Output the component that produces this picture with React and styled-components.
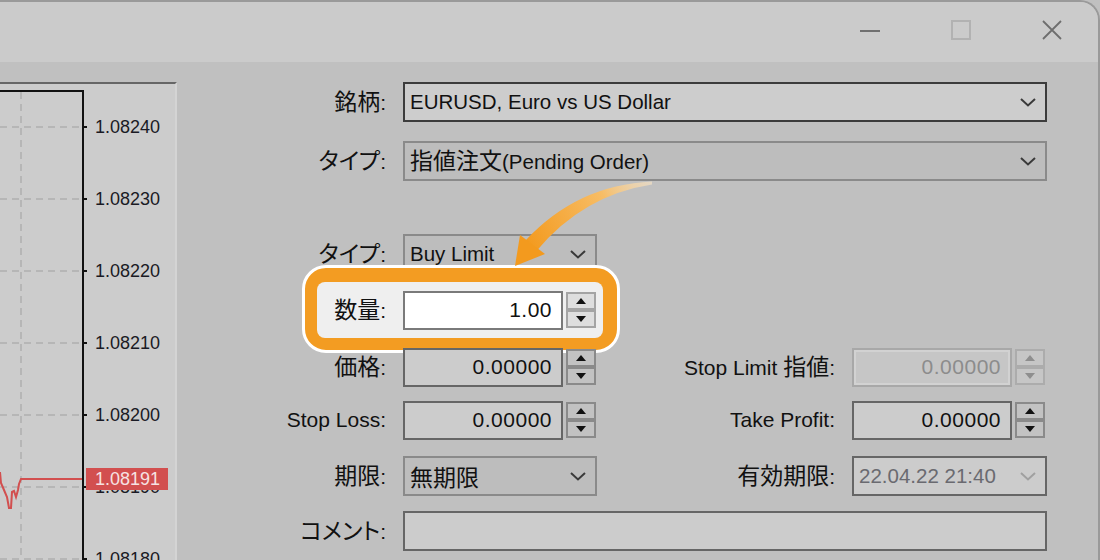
import React from 'react';
import styled, { createGlobalStyle } from 'styled-components';

const GlobalStyle = createGlobalStyle`
  * { box-sizing: border-box; }
  html, body { margin: 0; padding: 0; }
  body {
    width: 1100px;
    height: 560px;
    overflow: hidden;
    background: #c0c0c0;
    font-family: "Liberation Sans", "Noto Sans CJK JP", sans-serif;
  }
`;

const Window = styled.div`
  position: relative;
  width: 1100px;
  height: 560px;
  background: #c0c0c0;
  border-top: 2px solid #9a9a9a;
  border-right: 2px solid #9a9a9a;
  border-top-right-radius: 20px;
  overflow: hidden;
  display: flex;
  flex-direction: column;
`;

const TitleBar = styled.div`
  height: 60px;
  flex: none;
  background: #cbcbcb;
  display: flex;
  justify-content: flex-end;
  align-items: flex-start;
  gap: 71px;
  padding: 18px 36px 0 0;
`;

const TitleButton = styled.svg`
  width: 20px;
  height: 20px;
  display: block;
`;

const Content = styled.div`
  flex: 1;
  display: flex;
  min-height: 0;
`;

const ChartPanel = styled.div`
  width: 177px;
  flex: none;
  margin-top: 20px;
  background: #cccccc;
  border-top: 2px solid #666;
  border-right: 2px solid #d4d4d4;
  display: flex;
  overflow: hidden;
`;

const Plot = styled.div`
  width: 84px;
  flex: none;
  margin-top: 6px;
  border-top: 2px solid #111;
  border-right: 2px solid #111;
`;

const Axis = styled.div`
  position: relative;
  flex: 1;
  padding-top: 7px;
`;

const AxisLabel = styled.div`
  position: relative;
  height: 72px;
  display: flex;
  align-items: center;
  padding-left: 11px;
  font-size: 18px;
  color: #1a1a24;

  &::before {
    content: "";
    position: absolute;
    left: 0;
    top: 35px;
    width: 3px;
    height: 2px;
    background: #111;
  }
`;

const PriceBadge = styled.div`
  position: absolute;
  left: 2px;
  top: 384px;
  width: 82px;
  height: 22px;
  background: #d24f4f;
  color: #f6e2e2;
  font-size: 18px;
  line-height: 22px;
  padding-left: 9px;
`;

const Form = styled.div`
  flex: 1;
  padding-top: 20px;
`;

const Row = styled.div`
  position: relative;
  display: grid;
  grid-template-columns: 226px 194px 255px 195px;
  height: 40px;
  margin-top: ${p => p.$mt || 0}px;
  align-items: center;
`;

const Label = styled.div`
  position: relative;
  z-index: 2;
  text-align: right;
  padding-right: 17px;
  font-size: 21px;
  color: #111;
  white-space: nowrap;
`;

const Jp = styled.span`
  font-family: "Noto Sans CJK JP", sans-serif;
  font-size: 23px;
  font-feature-settings: "palt";
  line-height: 1;
`;

const fieldColors = {
  focus: { bg: '#cdcdcd', border: '#3c3c3c', text: '#111', arrow: '#3a3a3a' },
  normal: { bg: '#bdbdbd', border: '#8a8a8a', text: '#111', arrow: '#3a3a3a' },
  edit: { bg: '#cccccc', border: '#666', text: '#111', arrow: '#3a3a3a' },
  locked: { bg: '#cccccc', border: '#666', text: '#6a6a70', arrow: '#a0a0a0' },
  white: { bg: '#ffffff', border: '#7a7a7a', text: '#111', arrow: '#3a3a3a' },
  disabled: { bg: '#c6c6c6', border: '#a8a8a8', text: '#8c8c8c', arrow: '#a0a0a0' },
};

const Combo = styled.div`
  grid-column: ${p => (p.$wide ? '2 / span 3' : 'auto')};
  height: 40px;
  display: flex;
  align-items: center;
  justify-content: space-between;
  padding: 0 9px 0 5px;
  background: ${p => fieldColors[p.$kind].bg};
  border: 2px solid ${p => fieldColors[p.$kind].border};
  color: ${p => fieldColors[p.$kind].text};
  font-size: 20.5px;
  white-space: nowrap;

  svg { color: ${p => fieldColors[p.$kind].arrow}; }
`;

const SpinField = styled.div`
  position: relative;
  z-index: 2;
  display: flex;
  align-items: center;
  gap: 3px;
  height: 40px;
`;

const NumBox = styled.div`
  width: 160px;
  height: 39px;
  display: flex;
  align-items: center;
  justify-content: flex-end;
  padding-right: 9px;
  background: ${p => fieldColors[p.$kind].bg};
  border: 2px solid ${p => fieldColors[p.$kind].border};
  box-shadow: ${p => (p.$kind === 'disabled' ? 'inset 0 0 0 2px #d2d2d2' : 'none')};
  color: ${p => fieldColors[p.$kind].text};
  font-size: 21px;
  letter-spacing: 0.5px;
`;

const Spinner = styled.div`
  width: 30px;
  height: 36px;
  display: flex;
  flex-direction: column;
`;

const SpinButton = styled.div`
  flex: 1;
  display: flex;
  align-items: center;
  justify-content: center;
  background: ${p => (p.$light ? '#dedede' : p.$off ? '#c6c6c6' : '#c2c2c2')};
  border: 2px solid ${p => (p.$light ? '#a4a4a4' : p.$off ? '#acacac' : '#8a8a8a')};
  color: ${p => (p.$off ? '#8e8e8e' : '#111')};
`;

const Highlight = styled.div`
  position: absolute;
  z-index: 1;
  left: 125px;
  top: -25px;
  width: 318px;
  height: 88px;
  border: 3px solid #fff;
  border-radius: 24px;
  background: #f39c22;
  padding: 14px 14px 12px 12px;
`;

const HighlightFill = styled.div`
  height: 100%;
  border-radius: 8px;
  background: #efefef;
`;

const Overlay = styled.svg`
  position: absolute;
  left: 0;
  top: -2px;
  z-index: 5;
  pointer-events: none;
`;

const Chevron = () => (
  <svg width="16" height="9" viewBox="0 0 16 9">
    <polyline points="1,1 8,7.5 15,1" fill="none" stroke="currentColor" strokeWidth="2" />
  </svg>
);

const Spin = ({ light, off }) => (
  <Spinner>
    <SpinButton $light={light} $off={off}>
      <svg width="10" height="6" viewBox="0 0 10 6"><polygon points="0,6 5,0 10,6" fill="currentColor" /></svg>
    </SpinButton>
    <SpinButton $light={light} $off={off}>
      <svg width="10" height="6" viewBox="0 0 10 6"><polygon points="0,0 10,0 5,6" fill="currentColor" /></svg>
    </SpinButton>
  </Spinner>
);

const NumberField = ({ value, kind = 'edit', light }) => (
  <SpinField>
    <NumBox $kind={kind}>{value}</NumBox>
    <Spin light={light} off={kind === 'disabled'} />
  </SpinField>
);

const prices = ['1.08240', '1.08230', '1.08220', '1.08210', '1.08200', '1.08190', '1.08180'];
const gridY = [35, 107, 179, 251, 323, 395, 467];

const App = () => {
  return (
    <>
      <GlobalStyle />
      <Window>
        <TitleBar>
          <TitleButton viewBox="0 0 20 20">
            <line x1="0" y1="11" x2="20" y2="11" stroke="#707070" strokeWidth="2" />
          </TitleButton>
          <TitleButton viewBox="0 0 20 20">
            <rect x="1" y="1" width="18" height="18" fill="none" stroke="#b2b2b2" strokeWidth="2" />
          </TitleButton>
          <TitleButton viewBox="0 0 20 20">
            <path d="M1 1 L19 19 M19 1 L1 19" stroke="#6e6e6e" strokeWidth="1.8" />
          </TitleButton>
        </TitleBar>

        <Content>
          <ChartPanel>
            <Plot>
              <svg width="82" height="480" viewBox="0 0 82 480">
                {gridY.map(y => (
                  <line key={y} x1="0" y1={y} x2="82" y2={y} stroke="#b6b6b6" strokeWidth="2" strokeDasharray="7 5" />
                ))}
                <line x1="21" y1="0" x2="21" y2="480" stroke="#b6b6b6" strokeWidth="2" strokeDasharray="7 5" />
                <polyline
                  points="0,380 1,391 4,398 7,405 9,416 11,416 12,400 14,399 16,405 18,398 19,392 21,387 82,387"
                  fill="none"
                  stroke="#d24f4f"
                  strokeWidth="2"
                />
              </svg>
            </Plot>
            <Axis>
              {prices.map(p => (
                <AxisLabel key={p}>{p}</AxisLabel>
              ))}
              <PriceBadge>1.08191</PriceBadge>
            </Axis>
          </ChartPanel>

          <Form>
            <Row>
              <Label><Jp>銘柄</Jp>:</Label>
              <Combo $wide $kind="focus">EURUSD, Euro vs US Dollar<Chevron /></Combo>
            </Row>
            <Row $mt={19}>
              <Label><Jp>タイプ</Jp>:</Label>
              <Combo $wide $kind="normal"><span><Jp>指値注文</Jp>(Pending Order)</span><Chevron /></Combo>
            </Row>
            <Row $mt={53}>
              <Label><Jp>タイプ</Jp>:</Label>
              <Combo $kind="normal">Buy Limit<Chevron /></Combo>
            </Row>
            <Row $mt={16}>
              <Highlight><HighlightFill /></Highlight>
              <Label><Jp>数量</Jp>:</Label>
              <NumberField value="1.00" kind="white" light />
            </Row>
            <Row $mt={17}>
              <Label><Jp>価格</Jp>:</Label>
              <NumberField value="0.00000" />
              <Label>Stop Limit <Jp>指値</Jp>:</Label>
              <NumberField value="0.00000" kind="disabled" />
            </Row>
            <Row $mt={13}>
              <Label>Stop Loss:</Label>
              <NumberField value="0.00000" />
              <Label>Take Profit:</Label>
              <NumberField value="0.00000" />
            </Row>
            <Row $mt={16}>
              <Label><Jp>期限</Jp>:</Label>
              <Combo $kind="normal"><Jp>無期限</Jp><Chevron /></Combo>
              <Label><Jp>有効期限</Jp>:</Label>
              <Combo $kind="locked">22.04.22 21:40<Chevron /></Combo>
            </Row>
            <Row $mt={15}>
              <Label><Jp>コメント</Jp>:</Label>
              <Combo $wide $kind="edit" />
            </Row>
          </Form>
        </Content>

        <Overlay width="1100" height="560" viewBox="0 0 1100 560">
          <defs>
            <linearGradient id="arrowFade" gradientUnits="userSpaceOnUse" x1="652" y1="183" x2="530" y2="250">
              <stop offset="0" stopColor="#fbe6c6" stopOpacity="0.6" />
              <stop offset="0.35" stopColor="#f7bd66" />
              <stop offset="1" stopColor="#f39a1e" />
            </linearGradient>
          </defs>
          <path
            d="M652 181.5 Q577 185 525.5 240.5 L536.5 251 Q583 195 652 184.5 Z"
            fill="url(#arrowFade)"
          />
          <polygon points="515,266 520,235 545,254" fill="#f39a1e" />
        </Overlay>
      </Window>
    </>
  );
};

export default App;
